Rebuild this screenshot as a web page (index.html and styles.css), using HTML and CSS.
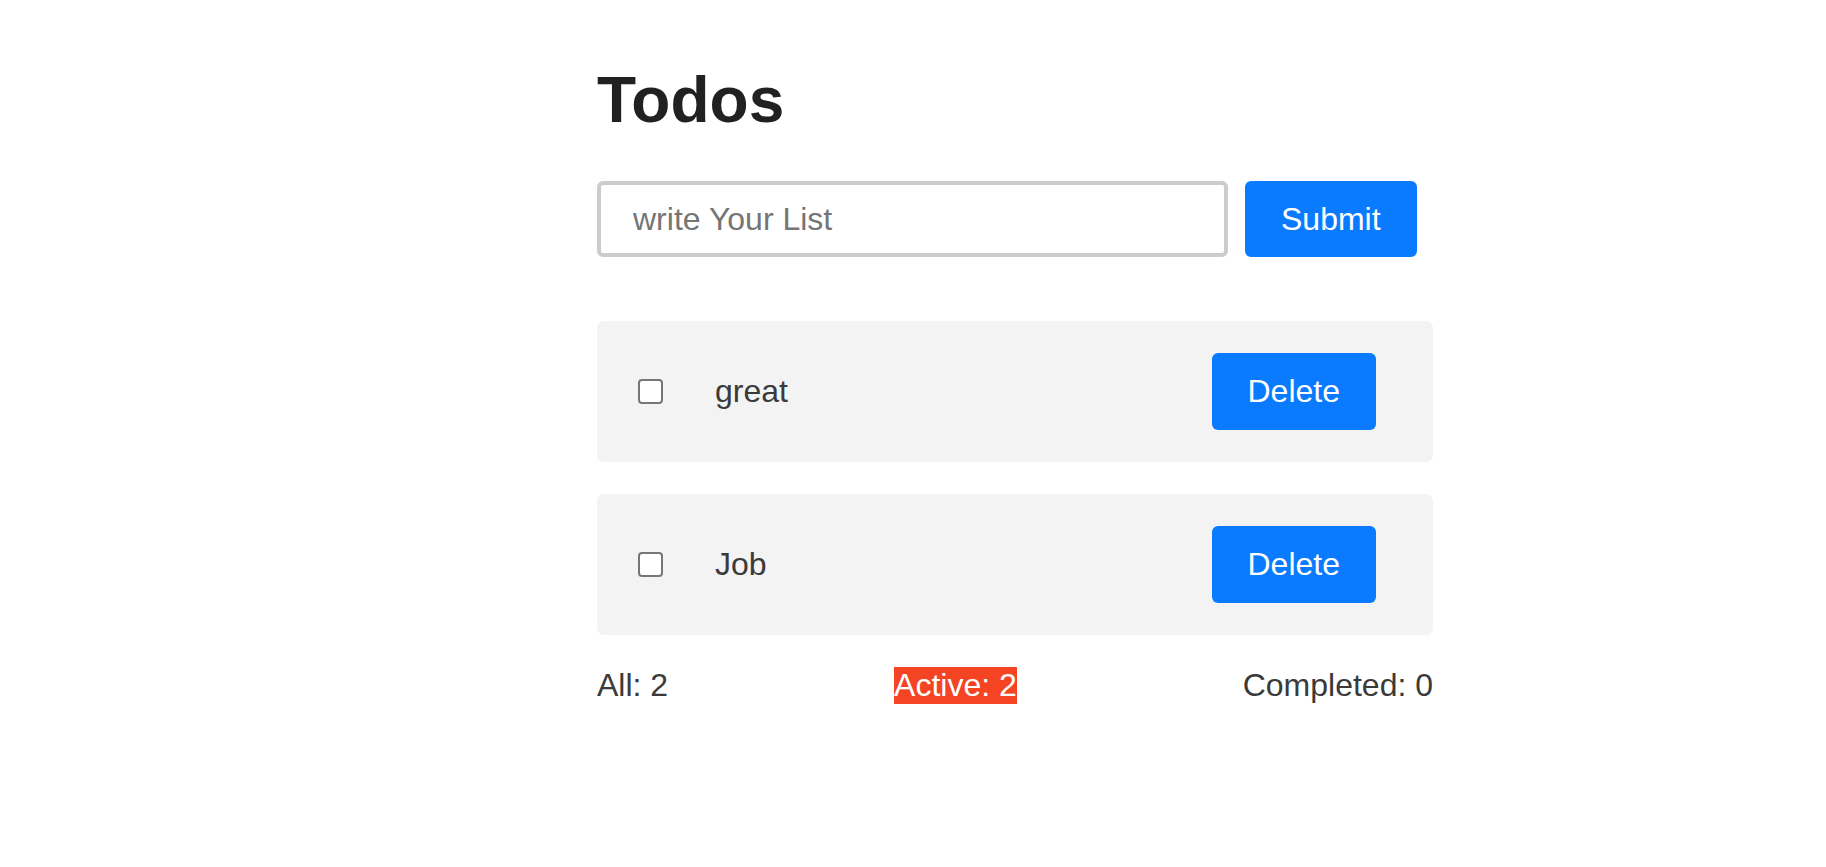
FILE: index.html
```html
<!DOCTYPE html>
<html lang="en">
<head>
<meta charset="utf-8">
<title>Todos</title>
<link rel="stylesheet" href="styles.css">
</head>
<body>
  <main class="app">
    <h1 class="title">Todos</h1>
    <form class="todo-form">
      <input class="todo-input" type="text" placeholder="write Your List">
      <button class="btn" type="button">Submit</button>
    </form>
    <ul class="todo-list">
      <li class="todo-item">
        <input class="todo-check" type="checkbox">
        <span class="todo-text">great</span>
        <button class="btn" type="button">Delete</button>
      </li>
      <li class="todo-item">
        <input class="todo-check" type="checkbox">
        <span class="todo-text">Job</span>
        <button class="btn" type="button">Delete</button>
      </li>
    </ul>
    <div class="stats">
      <span class="stat">All: 2</span>
      <span class="stat stat-active">Active: 2</span>
      <span class="stat">Completed: 0</span>
    </div>
  </main>
</body>
</html>
```

FILE: styles.css
```css
* { box-sizing: border-box; }

html, body {
  margin: 0;
  padding: 0;
  background: #ffffff;
}

body {
  font-family: "Liberation Sans", Arial, sans-serif;
  color: #3a3a3a;
}

.app {
  width: 836px;
  margin-left: calc(50% - 316px);
  padding-top: 64px;
}

.title {
  margin: 0;
  font-size: 64px;
  line-height: 72px;
  font-weight: 700;
  color: #212121;
}

.todo-form {
  display: flex;
  align-items: stretch;
  gap: 17px;
  margin-top: 45px;
}

.todo-input {
  width: 631px;
  height: 76px;
  border: 4px solid #cccccc;
  border-radius: 6px;
  padding: 0 32px;
  font-family: "Liberation Sans", Arial, sans-serif;
  font-size: 32px;
  color: #333;
  outline: none;
  background: #fff;
}

.todo-input::placeholder {
  color: #757575;
}

.btn {
  height: 77px;
  padding: 0 36px;
  border: none;
  border-radius: 6px;
  background: #0a7bff;
  color: #ffffff;
  font-family: "Liberation Sans", Arial, sans-serif;
  font-size: 32px;
  line-height: 37px;
  cursor: pointer;
}

.todo-form .btn {
  height: 76px;
}

.todo-list {
  list-style: none;
  margin: 64px 0 0;
  padding: 0;
  display: flex;
  flex-direction: column;
  gap: 32px;
}

.todo-item {
  display: flex;
  align-items: center;
  background: #f3f3f3;
  border-radius: 7px;
  padding: 32px 57px 32px 41px;
}

.todo-check {
  appearance: none;
  -webkit-appearance: none;
  margin: 0;
  width: 25px;
  height: 25px;
  border: 2px solid #767676;
  border-radius: 4px;
  background: #ffffff;
  flex: none;
}

.todo-text {
  flex: 1;
  margin-left: 52px;
  font-size: 32px;
  line-height: 37px;
  color: #3a3a3a;
}

.stats {
  display: flex;
  justify-content: space-between;
  margin-top: 32px;
  font-size: 32px;
  line-height: 37px;
  color: #3a3a3a;
}

.stat-active {
  background: #f44424;
  color: #ffffff;
}
```
